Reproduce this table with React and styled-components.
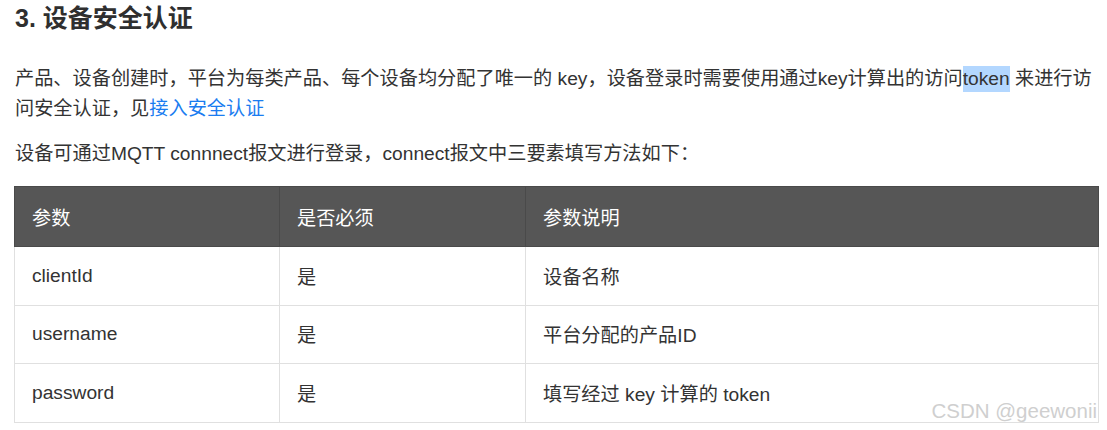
import React from 'react';
import styled, { createGlobalStyle } from 'styled-components';

const GlobalStyle = createGlobalStyle`
  body {
    margin: 0;
    background: #fff;
    font-family: "Liberation Sans", Arial, "Noto Sans CJK SC", sans-serif;
    color: #333;
  }
`;

const Page = styled.div`
  position: relative;
  width: 1085px;
  padding: 0 8px 0 14px;
  height: 430px;
  overflow: hidden;
`;

const Title = styled.h3`
  margin: 0;
  padding-left: 1px;
  font-size: 25px;
  line-height: 36px;
  font-weight: 700;
  color: #2f2f2f;
`;

const Para = styled.p`
  margin: ${p => p.$top || 0}px 0 0;
  padding-left: 1px;
  font-size: 19.2px;
  line-height: 30px;
  color: #333;
`;

const Link = styled.a`
  color: #1a7cf0;
  text-decoration: none;
`;

const Mark = styled.span`
  background: #b3d7ff;
  padding: 2px 0 3px;
`;

const Table = styled.table`
  margin-top: 17px;
  width: 1085px;
  border-collapse: collapse;
  table-layout: fixed;
  font-size: 19.2px;
  border: 1px solid #e0e0e0;
`;

const HeadCell = styled.th`
  background: #565656;
  color: #fff;
  font-weight: 400;
  text-align: left;
  height: 60px;
  padding: 0 17px;
  border: 1px solid #4a4a4a;
  box-sizing: border-box;
`;

const Cell = styled.td`
  height: 58.5px;
  padding: 0 17px;
  border: 1px solid #e0e0e0;
  color: #333;
  box-sizing: border-box;
`;

const Watermark = styled.div`
  position: absolute;
  right: 10px;
  bottom: 7px;
  font-size: 20.5px;
  color: #cfcfcf;
  font-family: "Liberation Sans", Arial, sans-serif;
`;

const rows = [
  ['clientId', '是', '设备名称'],
  ['username', '是', '平台分配的产品ID'],
  ['password', '是', '填写经过 key 计算的 token'],
];

export default function App() {
  return (
    <>
      <GlobalStyle />
      <Page>
        <Title>3. 设备安全认证</Title>
        <Para $top={28}>
          产品、设备创建时，平台为每类产品、每个设备均分配了唯一的 key，设备登录时需要使用通过key计算出的访问<Mark>token</Mark> 来进行访问安全认证，见<Link href="#">接入安全认证</Link>
        </Para>
        <Para $top={15}>设备可通过MQTT connnect报文进行登录，connect报文中三要素填写方法如下：</Para>
        <Table>
          <colgroup>
            <col style={{ width: 265 }} />
            <col style={{ width: 246 }} />
            <col />
          </colgroup>
          <thead>
            <tr>
              <HeadCell>参数</HeadCell>
              <HeadCell>是否必须</HeadCell>
              <HeadCell>参数说明</HeadCell>
            </tr>
          </thead>
          <tbody>
            {rows.map(r => (
              <tr key={r[0]}>
                {r.map((c, i) => <Cell key={i}>{c}</Cell>)}
              </tr>
            ))}
          </tbody>
        </Table>
        <Watermark>CSDN @geewonii</Watermark>
      </Page>
    </>
  );
}
